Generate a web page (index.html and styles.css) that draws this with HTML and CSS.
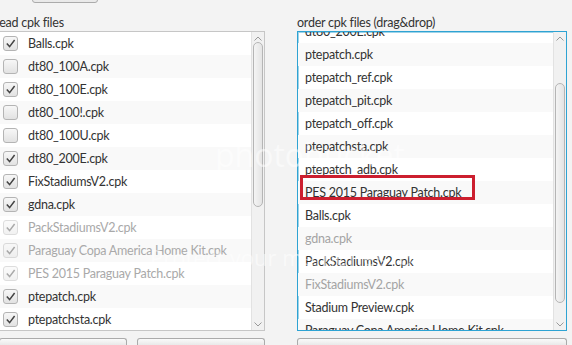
FILE: index.html
```html
<!DOCTYPE html>
<html lang="en">

<head>
    <meta charset="UTF-8">
    <title>cpk loader</title>
    <link rel="stylesheet" href="styles.css">
</head>

<body>
    <div class="topbar">
        <div class="btn top-btn"></div>
    </div>

    <div class="panes">
        <!-- left: files to load -->
        <div class="pane left-pane">
            <div class="pane-label">Read cpk files</div>
            <div class="list">
                <div class="rows">
                    <div class="row"><span class="check on"></span>Balls.cpk</div>
                    <div class="row"><span class="check"></span>dt80_100A.cpk</div>
                    <div class="row"><span class="check on"></span>dt80_100E.cpk</div>
                    <div class="row"><span class="check"></span>dt80_100!.cpk</div>
                    <div class="row"><span class="check"></span>dt80_100U.cpk</div>
                    <div class="row"><span class="check on"></span>dt80_200E.cpk</div>
                    <div class="row"><span class="check on"></span>FixStadiumsV2.cpk</div>
                    <div class="row"><span class="check on"></span>gdna.cpk</div>
                    <div class="row dim"><span class="check on"></span>PackStadiumsV2.cpk</div>
                    <div class="row dim"><span class="check on"></span>Paraguay Copa America Home Kit.cpk</div>
                    <div class="row dim"><span class="check on"></span>PES 2015 Paraguay Patch.cpk</div>
                    <div class="row"><span class="check on"></span>ptepatch.cpk</div>
                    <div class="row"><span class="check on"></span>ptepatchsta.cpk</div>
                </div>
                <div class="scrollbar">
                    <div class="arrow up"></div>
                    <div class="track"><div class="thumb thumb-left"></div></div>
                    <div class="arrow down"></div>
                </div>
            </div>
            <div class="buttons">
                <div class="btn"></div>
                <div class="btn"></div>
            </div>
        </div>

        <!-- right: load order -->
        <div class="pane right-pane">
            <div class="pane-label">order cpk files (drag&amp;drop)</div>
            <div class="list focused">
                <div class="rows">
                    <div class="scrolled">
                        <div class="row plain">dt80_200E.cpk</div>
                        <div class="row plain">ptepatch.cpk</div>
                        <div class="row plain">ptepatch_ref.cpk</div>
                        <div class="row plain">ptepatch_pit.cpk</div>
                        <div class="row plain">ptepatch_off.cpk</div>
                        <div class="row plain">ptepatchsta.cpk</div>
                        <div class="row plain">ptepatch_adb.cpk</div>
                        <div class="row plain">PES 2015 Paraguay Patch.cpk</div>
                        <div class="row plain">Balls.cpk</div>
                        <div class="row plain faded">gdna.cpk</div>
                        <div class="row plain">PackStadiumsV2.cpk</div>
                        <div class="row plain faded">FixStadiumsV2.cpk</div>
                        <div class="row plain">Stadium Preview.cpk</div>
                        <div class="row plain">Paraguay Copa America Home Kit.cpk</div>
                    </div>
                </div>
                <div class="scrollbar">
                    <div class="arrow up"></div>
                    <div class="track"><div class="thumb thumb-right"></div></div>
                    <div class="arrow down"></div>
                </div>
            </div>
            <div class="buttons">
                <div class="btn wide"></div>
            </div>
        </div>
    </div>

    <!-- annotation + watermark drawn over the screenshot -->
    <div class="highlight"></div>
    <div class="watermark wm-logo">photobucket</div>
    <div class="watermark wm-tag">Protect your memories for less!</div>
</body>

</html>
```

FILE: styles.css
```css
html {
    overflow: hidden;
}
body {
    margin: 0;
    background: #f3f3f3;
    font-family: Lato, "Noto Sans", sans-serif;
    font-size: 12.5px;
    letter-spacing: -0.25px;
    color: #333;
    width: 572px;
    height: 345px;
    overflow: hidden;
    position: relative;
}
.topbar {
    height: 3px;
    display: flow-root;
}
.btn {
    border: 1px solid #ababab;
    border-radius: 3px;
    background: linear-gradient(#fafafa, #e9e9e9);
    box-sizing: border-box;
    height: 30px;
}
.top-btn {
    width: 66px;
    margin-left: 32px;
    margin-top: -27px;
}
.panes {
    display: grid;
    grid-template-columns: 266px 270px;
    column-gap: 32px;
    margin-left: -1px;
}
.pane-label {
    height: 28px;
    box-sizing: border-box;
    padding-top: 11px;
    line-height: 17px;
    white-space: nowrap;
}
.left-pane .pane-label {
    margin-left: -7px;
}
.list {
    height: 300px;
    box-sizing: border-box;
    border: 1px solid #c6c6c6;
    background: #fff;
    display: flex;
}
.list.focused {
    border-color: #2ea3d3;
    box-shadow: inset 0 0 0 1px #9fd3e8;
}
.rows {
    flex: 1;
    overflow: hidden;
}
.scrolled {
    margin-top: -12px;
}
.row {
    height: 23px;
    display: flex;
    align-items: center;
    gap: 10px;
    padding-left: 3px;
    white-space: nowrap;
}
.row:nth-child(even) {
    background: #f9f9f9;
}
.row.plain {
    padding-left: 7px;
}
.row.faded {
    color: #a4a4a4;
}
.row.dim {
    color: #a9a9a9;
}
.row.dim .check {
    opacity: 0.45;
}
.check {
    width: 15px;
    height: 15px;
    box-sizing: border-box;
    border: 1px solid #b4b4b4;
    border-radius: 3px;
    background: linear-gradient(#f7f7f7, #e2e2e2);
    flex: none;
}
.check.on {
    background: url("data:image/svg+xml,%3Csvg xmlns='http://www.w3.org/2000/svg' width='13' height='13'%3E%3Cpath d='M2.8 6.6 L5.6 9.6 L10.6 3' fill='none' stroke='%23444' stroke-width='1.5'/%3E%3C/svg%3E") center no-repeat, linear-gradient(#f7f7f7, #e2e2e2);
}
.scrollbar {
    width: 12px;
    flex: none;
    display: flex;
    flex-direction: column;
    background: #f1f1f1;
    border-left: 1px solid #e2e2e2;
}
.arrow {
    height: 12px;
    flex: none;
    background-repeat: no-repeat;
    background-position: center;
}
.arrow.up {
    background-image: url("data:image/svg+xml,%3Csvg xmlns='http://www.w3.org/2000/svg' width='8' height='5'%3E%3Cpath d='M0.5 4.5 L4 1 L7.5 4.5' fill='none' stroke='%23999' stroke-width='1'/%3E%3C/svg%3E");
}
.arrow.down {
    background-image: url("data:image/svg+xml,%3Csvg xmlns='http://www.w3.org/2000/svg' width='8' height='5'%3E%3Cpath d='M0.5 0.5 L4 4 L7.5 0.5' fill='none' stroke='%23999' stroke-width='1'/%3E%3C/svg%3E");
}
.track {
    flex: 1;
    padding: 0 1px;
}
.thumb {
    border: 1px solid #b5b5b5;
    border-radius: 5px;
    background: linear-gradient(to right, #f4f4f4, #e4e4e4);
    box-sizing: border-box;
}
.thumb-left {
    margin-top: -2px;
    height: 165px;
}
.thumb-right {
    margin-top: 39px;
    height: 220px;
}
.buttons {
    display: flex;
    gap: 10px;
    margin-top: 7px;
}
.buttons .btn {
    flex: 1;
    height: 7px;
    border-bottom: 0;
    border-radius: 3px 3px 0 0;
}
.highlight {
    position: absolute;
    left: 300px;
    top: 175px;
    width: 175px;
    height: 25px;
    box-sizing: border-box;
    border: 3px solid #cc1f2f;
}
.watermark {
    position: absolute;
    color: rgba(255, 255, 255, 0.5);
    font-family: "Open Sans", sans-serif;
    letter-spacing: 0;
    white-space: nowrap;
}
.wm-logo {
    left: 215px;
    top: 133px;
    font-size: 32px;
}
.wm-tag {
    left: 150px;
    top: 242px;
    font-size: 22px;
}
```
